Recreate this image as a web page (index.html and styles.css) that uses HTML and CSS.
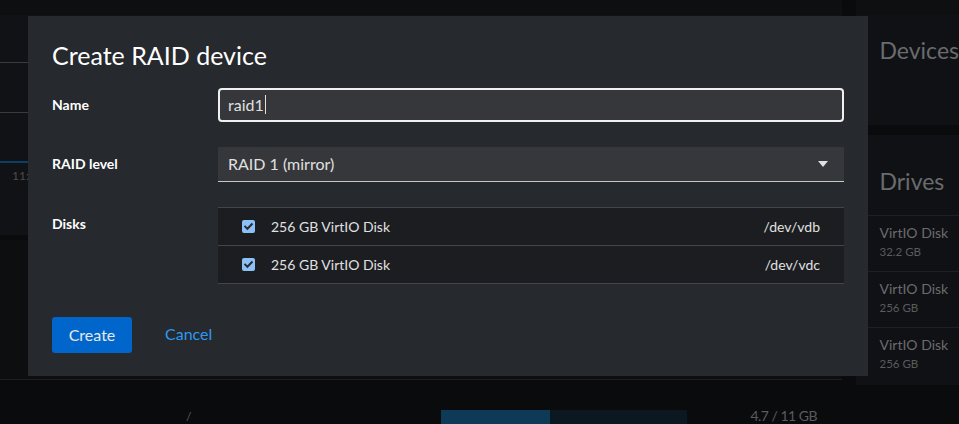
FILE: index.html
```html
<!DOCTYPE html>
<html>
<head>
<meta charset="utf-8">
<link rel="stylesheet" href="styles.css">
</head>
<body>
<div class="page">
  <div class="main-col">
    <div class="top-strip"></div>
    <div class="card chart-card">
      <div class="grid-line"></div>
      <div class="grid-line"></div>
      <div class="blue-line"></div>
      <div class="time">11:55</div>
    </div>
    <div class="card mid-card"></div>
    <div class="card fs-card">
      <span class="slash">/</span>
      <div class="bar"><div class="bar-fill" style="width:44%"></div></div>
      <span class="usage">4.7 / 11 GB</span>
    </div>
  </div>
  <div class="side-col">
    <div class="top-strip"></div>
    <div class="card side-card devices">
      <div class="side-title">Devices</div>
    </div>
    <div class="card side-card drives">
      <div class="side-title">Drives</div>
      <div class="drive"><div class="drive-name">VirtIO Disk</div><div class="drive-size">32.2 GB</div></div>
      <div class="drive"><div class="drive-name">VirtIO Disk</div><div class="drive-size">256 GB</div></div>
      <div class="drive"><div class="drive-name">VirtIO Disk</div><div class="drive-size">256 GB</div></div>
    </div>
  </div>
</div>

<div class="modal">
  <h1 class="modal-title">Create RAID device</h1>
  <div class="form">
    <div class="label">Name</div>
    <div class="input"><span>raid1</span><span class="caret"></span></div>

    <div class="label">RAID level</div>
    <div class="select">
      <span>RAID 1 (mirror)</span>
      <svg class="arrow" width="10" height="6" viewBox="0 0 10 6"><path d="M0 0 H10 L5 6 Z" fill="#e0e0e0"/></svg>
    </div>

    <div class="label">Disks</div>
    <div class="disks">
      <div class="disk-row">
        <span class="check"><svg width="13" height="13" viewBox="0 0 13 13"><path d="M3.2 6.6 L5.4 8.8 L9.8 4.2" stroke="#2a2c30" stroke-width="2" fill="none" stroke-linecap="square"/></svg></span>
        <span class="disk-name">256 GB VirtIO Disk</span>
        <span class="disk-path">/dev/vdb</span>
      </div>
      <div class="disk-row">
        <span class="check"><svg width="13" height="13" viewBox="0 0 13 13"><path d="M3.2 6.6 L5.4 8.8 L9.8 4.2" stroke="#2a2c30" stroke-width="2" fill="none" stroke-linecap="square"/></svg></span>
        <span class="disk-name">256 GB VirtIO Disk</span>
        <span class="disk-path">/dev/vdc</span>
      </div>
    </div>
  </div>
  <div class="actions">
    <button class="btn-primary">Create</button>
    <button class="btn-link">Cancel</button>
  </div>
</div>
</body>
</html>
```

FILE: styles.css
```css
* { box-sizing: border-box; }
html, body { margin: 0; padding: 0; }
body {
  width: 959px;
  height: 424px;
  overflow: hidden;
  background: #0a0b0d;
  font-family: Lato, "Noto Sans", sans-serif;
}
.page {
  display: flex;
  gap: 14px;
  height: 424px;
}
.main-col {
  width: 842px;
  display: flex;
  flex-direction: column;
}
.side-col {
  flex: 1;
  display: flex;
  flex-direction: column;
}
.top-strip { height: 15px; background: #0e0f11; }
.card { background: #111215; }
.chart-card {
  height: 220px;
  padding-top: 47px;
  display: flex;
  flex-direction: column;
}
.grid-line { height: 1px; background: #3a3b3e; margin-bottom: 49px; }
.blue-line { height: 2px; background: #0b3f66; margin-top: -1px; width: 80px; }
.time { color: #4a4b4e; font-size: 12px; padding-left: 12px; margin-top: 5px; }
.mid-card { margin-top: 5px; height: 140px; background: #0d0e10; border-bottom: 1px solid #1c1d20; }
.fs-card {
  flex: 1;
  background: #0a0b0d;
  display: flex;
  align-items: flex-end;
}
.slash { color: #5a5b5e; font-size: 12px; margin-left: 186px; line-height: 12px; margin-bottom: 1px; }
.bar { width: 246px; height: 14px; background: #0c1820; margin-left: 250px; display: flex; }
.bar-fill { background: #0e3a57; height: 100%; }
.usage { color: #5a5b5e; font-size: 14px; margin-left: 63px; line-height: 16px; letter-spacing: -0.5px; }

.side-card { padding: 0 0 0 24px; }
.devices { height: 110px; padding-top: 20px; background: #101114; }
.drives { margin-top: 10px; height: 250px; padding-top: 31px; background: #101114; }
.side-title { color: #6a6b6e; font-size: 23px; line-height: 30px; font-weight: 400; }
.drives .side-title { margin-bottom: 19px; }
.drive { border-top: 1px solid #1f2023; margin-left: -12px; padding: 7px 0 8px 12px; height: 56px; }
.drive-name { color: #6a6b6e; font-size: 14px; line-height: 20px; }
.drive-size { color: #5a5b5e; font-size: 11.5px; line-height: 18px; }

.modal {
  position: fixed;
  left: 28px;
  top: 16px;
  width: 840px;
  height: 360px;
  background: #26292d;
  padding: 24px;
  color: #e0e0e0;
  display: flex;
  flex-direction: column;
}
.modal-title {
  margin: 0;
  font-size: 25px;
  font-weight: 400;
  line-height: 31px;
  color: #ffffff;
}
.form {
  margin-top: 17px;
  display: grid;
  grid-template-columns: 166px 626px;
  row-gap: 25px;
}
.label {
  font-size: 14px;
  font-weight: 700;
  color: #ffffff;
  line-height: 21px;
  padding-top: 6px;
}
.input {
  height: 34px;
  border: 2px solid #f0f0f0;
  border-radius: 4px;
  background: #36373b;
  padding: 0 8px 2px;
  display: flex;
  align-items: center;
  font-size: 16px;
  color: #e0e0e0;
}
.caret { width: 1px; height: 19px; background: #e0e0e0; margin-left: 1px; }
.select {
  height: 35px;
  background: #36373a;
  border-bottom: 1px solid #c7c7c7;
  padding: 0 16px 2px 10px;
  display: flex;
  align-items: center;
  justify-content: space-between;
  font-size: 16px;
  color: #e0e0e0;
}
.arrow { margin-top: 2px; }
.disks {
  background: #1b1d21;
  border-top: 1px solid #444548;
}
.disk-row {
  height: 38px;
  border-bottom: 1px solid #444548;
  display: flex;
  align-items: center;
  padding: 0 24px 1px;
  font-size: 14px;
  color: #e0e0e0;
}
.check {
  width: 13px;
  height: 13px;
  border-radius: 2px;
  background: #8bc1f7;
  display: flex;
  margin-top: 1px;
}
.disk-name { margin-left: 16px; flex: 1; }
.actions {
  margin-top: 33px;
  display: flex;
  align-items: center;
  gap: 17px;
}
button { font-family: inherit; font-size: 16px; border: none; cursor: pointer; padding-bottom: 3px; }
.btn-primary {
  width: 80px;
  height: 36px;
  background: #0066cc;
  color: #e8e8e8;
  border-radius: 3px;
}
.btn-link {
  background: none;
  color: #2b9af3;
  padding: 0 16px 3px;
  height: 36px;
}
```
